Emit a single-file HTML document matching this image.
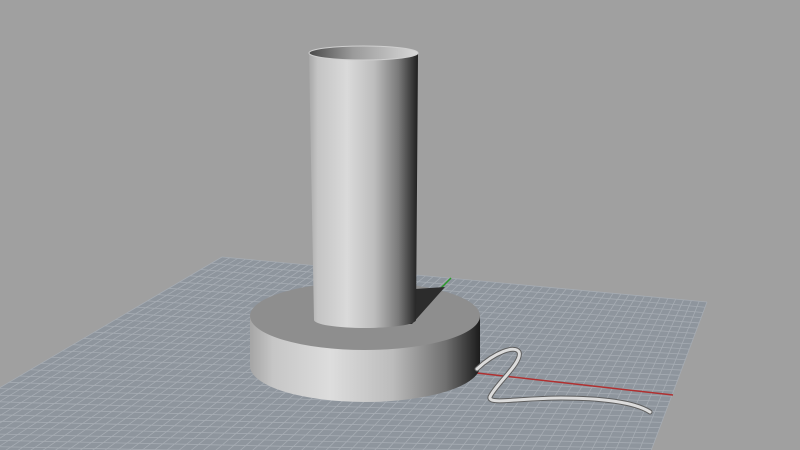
<!DOCTYPE html>
<html><head><meta charset="utf-8"><style>
html,body{margin:0;padding:0;background:#a0a0a0;width:800px;height:450px;overflow:hidden}
svg{display:block}
</style></head><body>
<svg id="s" width="800" height="450" viewBox="0 0 800 450" xmlns="http://www.w3.org/2000/svg">
<defs>
<linearGradient id="cyl" x1="0" x2="1" y1="0" y2="0">
<stop offset="0" stop-color="#a8a8a8"/><stop offset="0.08" stop-color="#c4c4c4"/>
<stop offset="0.35" stop-color="#dadada"/><stop offset="0.6" stop-color="#bdbdbd"/>
<stop offset="0.82" stop-color="#7a7a7a"/><stop offset="1" stop-color="#1e1e1e"/>
</linearGradient>
<linearGradient id="inner" x1="0" x2="1">
<stop offset="0" stop-color="#4a4a4a"/><stop offset="0.4" stop-color="#9a9a9a"/><stop offset="1" stop-color="#d8d8d8"/>
</linearGradient>
<linearGradient id="disk" x1="0" x2="1">
<stop offset="0" stop-color="#a5a5a5"/><stop offset="0.1" stop-color="#c6c6c6"/>
<stop offset="0.35" stop-color="#dddddd"/><stop offset="0.62" stop-color="#bcbcbc"/>
<stop offset="0.85" stop-color="#707070"/><stop offset="1" stop-color="#1c1c1c"/>
</linearGradient>
</defs>
<polygon points="222,257 707,302 640,480 -140,470" fill="#8e959d"/>
<g id="grid" stroke="#a6acb3" stroke-width="0.8" fill="none"></g>
<line x1="441" y1="288" x2="451" y2="278" stroke="#2a9a2a" stroke-width="1.5"/>
<line x1="477" y1="373" x2="673" y2="395" stroke="#b03030" stroke-width="1.5"/>
<path d="M250,316 L250,366 A115,36 0 0 0 480,366 L480,316 Z" fill="url(#disk)"/>
<ellipse cx="365" cy="316" rx="115" ry="34" fill="#8e8e8e"/>
<path d="M400,290 L445,287 L412,324 L400,324 Z" fill="#2c2c2c"/>
<path d="M309,53 L314,320 A51,8 0 0 0 416,320 L418,53 Z" fill="url(#cyl)"/>
<ellipse cx="363.5" cy="53" rx="54.5" ry="7" fill="url(#inner)"/>
<ellipse cx="363.5" cy="53" rx="54.5" ry="7" fill="none" stroke="#cfcfcf" stroke-width="1"/>
<path d="M477,369 C495,352 515,345 519,352 C523,362 495,385 490,397 C488,405 520,398 561,398 C600,398 635,402 650,412" fill="none" stroke="#5e5e5e" stroke-width="5" stroke-linecap="round"/>
<path d="M477,369 C495,352 515,345 519,352 C523,362 495,385 490,397 C488,405 520,398 561,398 C600,398 635,402 650,412" fill="none" stroke="#dcdcdc" stroke-width="3" stroke-linecap="round"/>
</svg>
<script>
var g=document.getElementById('grid'),TL=[222,257],TR=[707,302],BR=[640,480],BL=[-140,470];
function P(u,v){var a=[TL[0]+(TR[0]-TL[0])*u,TL[1]+(TR[1]-TL[1])*u],b=[BL[0]+(BR[0]-BL[0])*u,BL[1]+(BR[1]-BL[1])*u];return[a[0]+(b[0]-a[0])*v,a[1]+(b[1]-a[1])*v];}
var h='';var NU=62,NV=34;
for(var i=0;i<=NU;i++){var a=P(i/NU,0),b=P(i/NU,1);h+='<line x1="'+a[0]+'" y1="'+a[1]+'" x2="'+b[0]+'" y2="'+b[1]+'"/>';}
for(var j=0;j<=NV;j++){var a=P(0,j/NV),b=P(1,j/NV);h+='<line x1="'+a[0]+'" y1="'+a[1]+'" x2="'+b[0]+'" y2="'+b[1]+'"/>';}
g.innerHTML=h;
</script>
</body></html>
